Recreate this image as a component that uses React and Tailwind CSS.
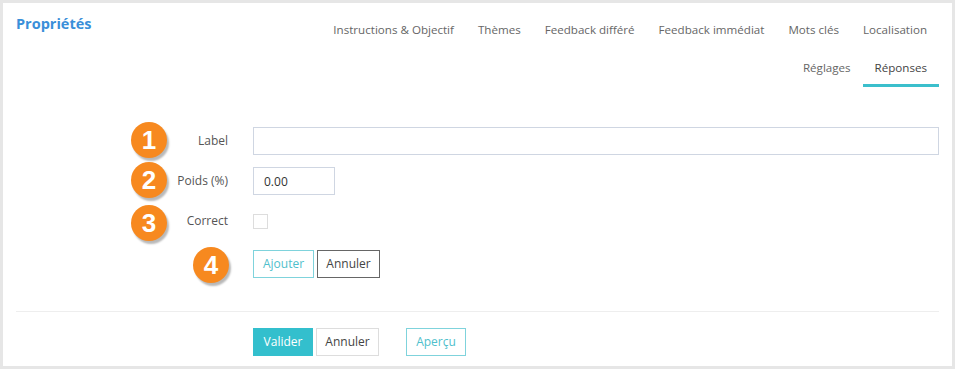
const tabsTop = ['Instructions & Objectif', 'Thèmes', 'Feedback différé', 'Feedback immédiat', 'Mots clés', 'Localisation'];
const tabsBottom = ['Réglages', 'Réponses'];

const Badge = ({ n, className }) => (
  <div
    className={`absolute w-[36px] h-[36px] rounded-full bg-[#f7891f] shadow-[2px_3px_2px_rgba(0,0,0,0.28)] flex items-center justify-center text-white text-[26px] font-bold font-['Liberation_Sans',Arial,sans-serif] ${className}`}
  >
    {n}
  </div>
);

const Tab = ({ label, active }) => (
  <div
    className={`px-[12px] pt-[10px] pb-[7px] leading-[18px] text-[11.6px] border-b-[3px] ${
      active ? 'border-[#3bbfcc] text-[#444]' : 'border-transparent text-[#666]'
    }`}
  >
    {label}
  </div>
);

export default function App() {
  return (
    <div className="w-[955px] h-[369px] border-[3px] border-[#e6e6e6] bg-white font-['Open_Sans',sans-serif] text-[12px] text-[#555]">
      <div className="px-[13px]">
        <div className="flex justify-between pt-[8px]">
          <h2 className="pt-[3px] text-[14.5px] leading-[20px] font-bold text-[#3a8fd9]">Propriétés</h2>
          <div className="flex flex-col items-end">
            <div className="flex">
              {tabsTop.map((t) => (
                <Tab key={t} label={t} />
              ))}
            </div>
            <div className="flex">
              {tabsBottom.map((t) => (
                <Tab key={t} label={t} active={t === 'Réponses'} />
              ))}
            </div>
          </div>
        </div>

        <div className="pt-[40px] pb-[33px] border-b border-[#eeeeee]">
          <div className="relative flex items-center h-[28px] mb-[12px]">
            <Badge n="1" className="left-[115px] -top-[5px]" />
            <label className="w-[237px] pr-[25px] text-right">Label</label>
            <input className="flex-1 h-[28px] border border-[#cfd6e2] px-[10px] outline-none" />
          </div>
          <div className="relative flex items-center h-[28px] mb-[12px]">
            <Badge n="2" className="left-[115px] -top-[5px]" />
            <label className="w-[237px] pr-[25px] text-right">Poids (%)</label>
            <input
              defaultValue="0.00"
              className="w-[82px] h-[28px] border border-[#cfd6e2] px-[10px] text-[#333] outline-none"
            />
          </div>
          <div className="relative flex items-center h-[28px] mb-[15px]">
            <Badge n="3" className="left-[115px] -top-[2px]" />
            <label className="w-[237px] pr-[25px] text-right">Correct</label>
            <div className="w-[15px] h-[15px] border border-[#dddddd]" />
          </div>
          <div className="relative flex items-center h-[28px]">
            <Badge n="4" className="left-[177px] -top-[3px]" />
            <div className="w-[237px]" />
            <button className="h-[28px] w-[61px] border border-[#7fd3dc] text-[#4fc0cc]">Ajouter</button>
            <button className="ml-[3px] h-[28px] w-[63px] border border-[#666] text-[#444]">Annuler</button>
          </div>
        </div>

        <div className="flex items-center pt-[16px]">
          <div className="w-[237px]" />
          <button className="h-[28px] w-[60px] bg-[#33bfcd] text-white">Valider</button>
          <button className="ml-[3px] h-[28px] w-[63px] border border-[#dddddd] text-[#444]">Annuler</button>
          <button className="ml-[27px] h-[28px] w-[60px] border border-[#7fd3dc] text-[#4fc0cc]">Aperçu</button>
        </div>
      </div>
    </div>
  );
}
